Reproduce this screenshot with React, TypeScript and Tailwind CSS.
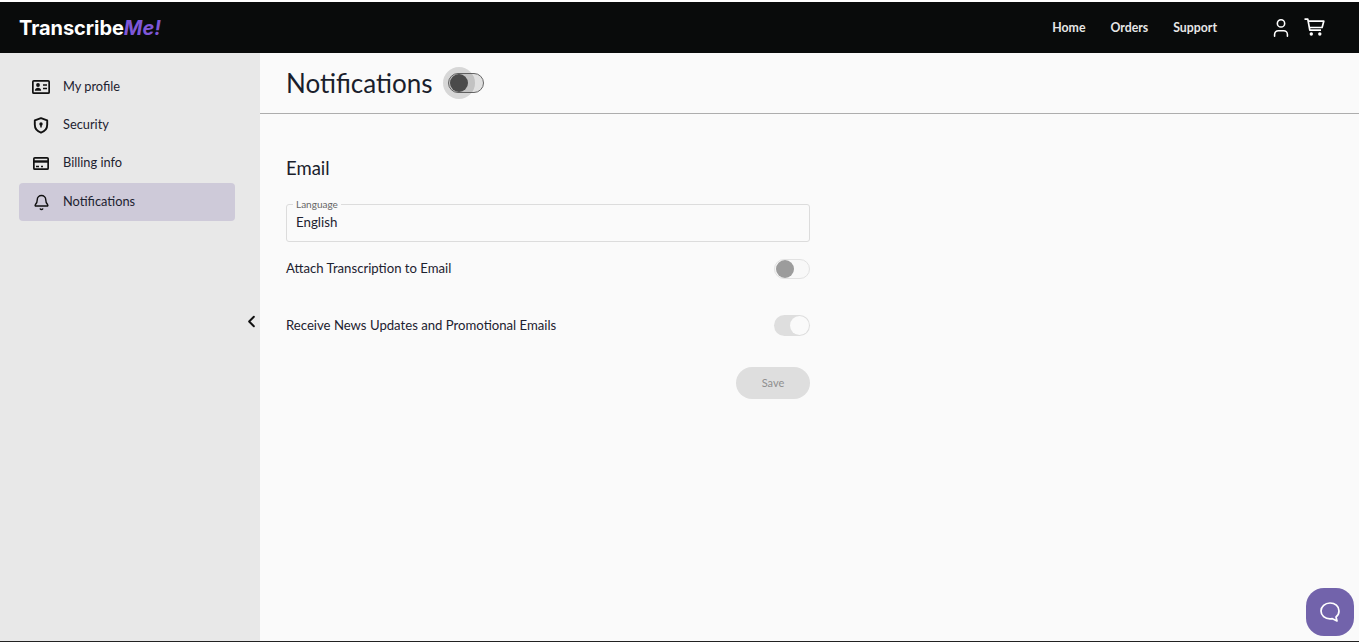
import { ChevronLeft, User, Bell } from "lucide-react";

const font = "font-['Lato','Noto_Sans',sans-serif]";

const ProfileIcon = () => (
  <svg width="18" height="14" viewBox="0 0 18 14" fill="none" stroke="#111" strokeWidth="1.7">
    <rect x="0.85" y="0.85" width="16.3" height="12.3" rx="1" />
    <circle cx="6" cy="5" r="1.9" fill="#111" stroke="none" />
    <path d="M2.8 10.8c.3-2.200 1.600-3 3.200-3s2.900.8 3.200 3z" fill="#111" stroke="none" />
    <path d="M11 5h4M11 8.500h4" strokeWidth="1.400" />
  </svg>
);

const ShieldIcon = () => (
  <svg width="16" height="17" viewBox="0 0 16 17" fill="none" stroke="#111" strokeWidth="1.900">
    <path d="M8 1.100l6.200 2.300v4.400c0 3.900-2.700 6.700-6.200 7.900-3.500-1.200-6.200-4-6.200-7.900V3.400z" strokeLinejoin="round" />
    <circle cx="8" cy="7" r="1.700" fill="#111" stroke="none" />
    <path d="M8 7.500v3" strokeWidth="1.500" />
  </svg>
);

const CardIcon = () => (
  <svg width="16" height="13" viewBox="0 0 16 13" fill="none" stroke="#111" strokeWidth="1.700">
    <rect x="0.850" y="0.850" width="14.300" height="11.300" rx="1" />
    <path d="M1 4.500h14" strokeWidth="2.400" />
    <path d="M3 9.500h3M8 9.500h2" strokeWidth="1.400" />
  </svg>
);

const CartIcon = () => (
  <svg width="21" height="19" viewBox="0 0 21 19" fill="none" stroke="white" strokeWidth="1.700">
    <path d="M0.500 1.200h3.300l2 11h11.200" strokeLinejoin="round" />
    <path d="M4 3.200h15.800l-1.700 6.300H5.300" strokeLinejoin="round" />
    <circle cx="7.300" cy="16" r="1.700" fill="white" stroke="none" />
    <circle cx="15.800" cy="16" r="1.700" fill="white" stroke="none" />
  </svg>
);

const navItems = [
  { label: "My profile", icon: <ProfileIcon /> },
  { label: "Security", icon: <ShieldIcon /> },
  { label: "Billing info", icon: <CardIcon /> },
  { label: "Notifications", icon: <Bell size={17} strokeWidth={2} color="#111" />, active: true },
];

const Sidebar = () => (
  <aside className="relative w-[260px] shrink-0 bg-[#e8e8e8] pt-[14px] pl-[19px]">
    <nav className="flex flex-col pt-[1px]">
      {navItems.map((item) => (
        <div
          key={item.label}
          className={`flex h-[38px] w-[216px] items-center rounded-[4px] ${item.active ? "mt-[1px] bg-[#cecad9]" : ""}`}
        >
          <span className="flex w-[44px] justify-center">{item.icon}</span>
          <span className="text-[12.800px] text-[#1d2230]">{item.label}</span>
        </div>
      ))}
    </nav>
    <ChevronLeft size={19} strokeWidth={2.500} color="#111" className="absolute right-[-1px] top-[259px]" />
  </aside>
);

const Header = () => (
  <header className="flex h-[51px] shrink-0 items-center justify-between bg-[#090b0b] pl-[19px] pr-[34px]">
    <div className="font-['Inter',sans-serif] text-[20px] font-bold tracking-[-0.05px] text-white">
      Transcribe<span className="italic text-[#7e57d8]">Me!</span>
    </div>
    <div className="flex items-center">
      <nav className="flex gap-[25px] pt-[1px] text-[12.300px] font-bold text-[#e6e6e6]">
        <span>Home</span>
        <span>Orders</span>
        <span>Support</span>
      </nav>
      <div className="ml-[53px] flex items-center gap-[12px] text-white">
        <User size={22} strokeWidth={1.700} />
        <CartIcon />
      </div>
    </div>
  </header>
);

const Row = ({ label, children, className }: { label: string; children: React.ReactNode; className: string }) => (
  <div className={`flex w-[524px] items-center justify-between ${className}`}>
    <span className="text-[13.150px] text-[#1d2230]">{label}</span>
    {children}
  </div>
);

const Content = () => (
  <main className="flex-1 bg-[#fafafa]">
    <div className="flex h-[61px] items-center border-b border-[#adadad] pl-[26px]">
      <h1 className="text-[26px] text-[#1a1e2c]">Notifications</h1>
      <div className="relative ml-[15px] h-[20px] w-[36px] rounded-full border border-[#666] bg-[#e0e0e0]">
        <span className="absolute left-[-6px] top-[-7px] h-[32px] w-[32px] rounded-full bg-[#4a4a4a]/20" />
        <span className="absolute left-[1px] top-[0px] h-[18px] w-[18px] rounded-full bg-[#4a4a4a]" />
      </div>
    </div>
    <div className="pl-[26px]">
      <h2 className="mt-[42px] text-[18.500px] leading-[24px] text-[#1a1e2c]">Email</h2>
      <fieldset className="mt-[19px] h-[43px] w-[524px] rounded-[3px] border border-[#dcdcdc] pl-[6px] text-[13.300px] text-[#1d2230]">
        <legend className="px-[3px] text-[10px] leading-[11px] text-[#666]">Language</legend>
        <div className="mt-[3px] pl-[3px] leading-[18px]">English</div>
      </fieldset>
      <Row label="Attach Transcription to Email" className="mt-[17px]">
        <div className="relative h-[20px] w-[36px] rounded-full border border-[#e2e2e2] bg-[#f8f8f8]">
          <span className="absolute left-[1px] top-[0px] h-[18px] w-[18px] rounded-full bg-[#9c9c9c]" />
        </div>
      </Row>
      <Row label="Receive News Updates and Promotional Emails" className="mt-[36px]">
        <div className="relative h-[21px] w-[36px] rounded-full bg-[#dedede]">
          <span className="absolute right-[1px] top-[1px] h-[19px] w-[19px] rounded-full bg-[#fafafa]" />
        </div>
      </Row>
      <div className="mt-[31px] flex w-[524px] justify-end">
        <button className="h-[32px] w-[74px] rounded-full bg-[#dedede] text-[11px] text-[#8f8f8f]">Save</button>
      </div>
    </div>
  </main>
);

export default function App() {
  return (
    <div className={`relative flex h-[642px] flex-col overflow-hidden border-b border-[#222] bg-white pt-[2px] ${font}`}>
      <Header />
      <div className="flex flex-1">
        <Sidebar />
        <Content />
      </div>
      <button className="absolute bottom-[5px] right-[5px] flex h-[48px] w-[48px] items-center justify-center rounded-[18px] bg-[#7263ab]">
        <svg width="22" height="22" viewBox="0 0 22 22" fill="none" stroke="white" strokeWidth="1.700">
          <path d="M11 2c5 0 9 3.200 9 8 0 3-1.700 5-3 6l1 4-5-2.400c-.7.200-1.300.200-2 .200-5 0-9-3.400-9-7.800S6 2 11 2z" strokeLinejoin="round" />
        </svg>
      </button>
    </div>
  );
}
